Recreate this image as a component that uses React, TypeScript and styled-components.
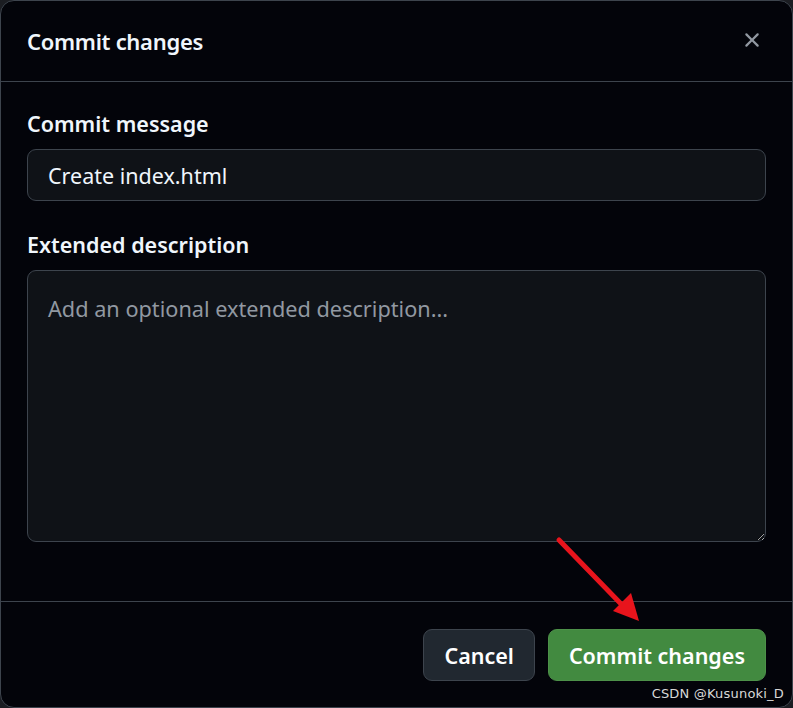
import React from 'react';
import styled, { createGlobalStyle } from 'styled-components';

const GlobalStyle = createGlobalStyle`
  html, body {
    margin: 0;
    padding: 0;
    background: #1b1d22;
  }
  * {
    box-sizing: border-box;
  }
`;

const Dialog = styled.div`
  position: relative;
  width: 793px;
  height: 708px;
  display: flex;
  flex-direction: column;
  background: #03040a;
  border: 1px solid #3d444d;
  border-radius: 14px;
  overflow: hidden;
  font-family: 'Noto Sans', 'Open Sans', sans-serif;
  color: #f0f6fc;
`;

const Header = styled.div`
  height: 81px;
  flex-shrink: 0;
  display: flex;
  align-items: center;
  justify-content: space-between;
  padding: 0 24px 0 26px;
  border-bottom: 1px solid #3d444d;
`;

const Title = styled.h1`
  margin: 0;
  font-size: 22px;
  font-weight: 600;
  letter-spacing: -0.3px;
`;

const CloseButton = styled.button`
  width: 32px;
  height: 32px;
  display: flex;
  align-items: center;
  justify-content: center;
  padding: 0;
  margin-top: -2px;
  background: transparent;
  border: none;
  color: #9198a1;
  cursor: pointer;
`;

const Body = styled.div`
  flex: 1;
  display: flex;
  flex-direction: column;
  padding: 27px 26px 0 26px;
`;

const Field = styled.div`
  display: flex;
  flex-direction: column;
  gap: 10px;
  margin-bottom: 29px;
`;

const Label = styled.label`
  font-size: 21.5px;
  font-weight: 600;
  line-height: 30px;
`;

const TextInput = styled.input`
  height: 52px;
  padding: 0 20px;
  background: #0f1217;
  border: 1px solid #3d444d;
  border-radius: 9px;
  color: #f0f6fc;
  font-family: inherit;
  font-size: 21.5px;
  outline: none;
`;

const TextArea = styled.textarea`
  height: 272px;
  padding: 23px 20px;
  background: #0f1217;
  border: 1px solid #3d444d;
  border-radius: 9px;
  color: #f0f6fc;
  font-family: inherit;
  font-size: 21.7px;
  line-height: 30px;
  resize: vertical;
  outline: none;

  &::placeholder {
    color: #9198a1;
  }
`;

const Footer = styled.div`
  flex-shrink: 0;
  display: flex;
  justify-content: flex-end;
  gap: 13px;
  padding: 27px 26px 26px 26px;
  border-top: 1px solid #3d444d;
`;

const Button = styled.button<{ primary?: boolean }>`
  height: 52px;
  padding: 0 20px;
  border-radius: 9px;
  border: 1px solid ${({ primary }) => (primary ? '#4d9149' : '#3d444d')};
  background: ${({ primary }) => (primary ? '#428a40' : '#212830')};
  color: #ffffff;
  font-family: inherit;
  font-size: 21.5px;
  font-weight: 600;
  cursor: pointer;
`;

const Arrow = styled.svg`
  position: absolute;
  left: 550px;
  top: 530px;
  pointer-events: none;
`;

const Watermark = styled.span`
  position: absolute;
  right: 8px;
  bottom: 6px;
  font-family: 'DejaVu Sans', sans-serif;
  font-size: 13px;
  color: #d8d8d8;
  letter-spacing: 0.2px;
`;

export default function App() {
  return (
    <>
      <GlobalStyle />
      <Dialog>
        <Header>
          <Title>Commit changes</Title>
          <CloseButton aria-label="Close">
            <svg width="24" height="24" viewBox="0 0 16 16" fill="currentColor">
              <path d="M3.72 3.72a.75.75 0 0 1 1.06 0L8 6.94l3.22-3.22a.749.749 0 0 1 1.275.326.749.749 0 0 1-.215.734L9.06 8l3.22 3.22a.749.749 0 0 1-.326 1.275.749.749 0 0 1-.734-.215L8 9.06l-3.22 3.22a.751.751 0 0 1-1.042-.018.751.751 0 0 1-.018-1.042L6.94 8 3.72 4.78a.75.75 0 0 1 0-1.06Z" />
            </svg>
          </CloseButton>
        </Header>
        <Body>
          <Field>
            <Label>Commit message</Label>
            <TextInput defaultValue="Create index.html" />
          </Field>
          <Field>
            <Label>Extended description</Label>
            <TextArea placeholder="Add an optional extended description..." />
          </Field>
        </Body>
        <Footer>
          <Button>Cancel</Button>
          <Button primary>Commit changes</Button>
        </Footer>
        <Arrow width="100" height="100" viewBox="0 0 100 100">
          <line x1="8" y1="9" x2="74" y2="77" stroke="#e8141c" strokeWidth="5" strokeLinecap="round" />
          <polygon points="88,90 62,80 80,62" fill="#e8141c" />
        </Arrow>
        <Watermark>CSDN @Kusunoki_D</Watermark>
      </Dialog>
    </>
  );
}
